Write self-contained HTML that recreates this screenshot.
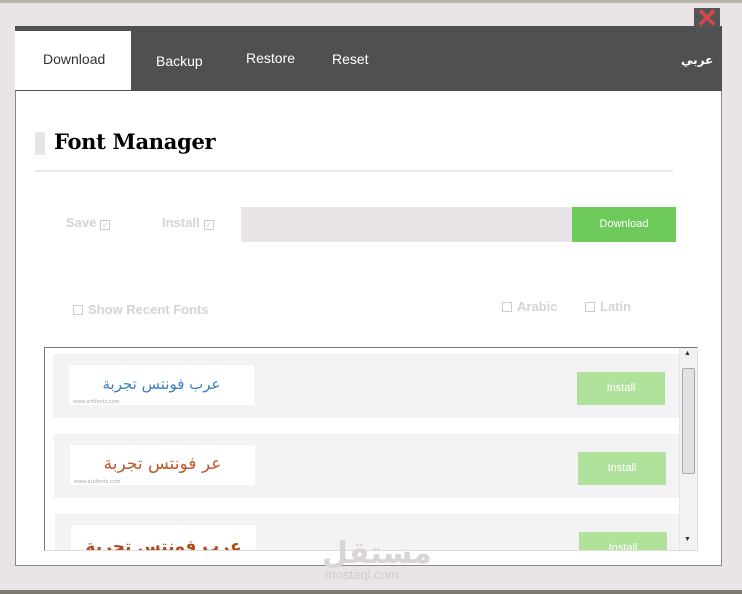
<!DOCTYPE html>
<html><head><meta charset="utf-8"><style>
*{margin:0;padding:0;box-sizing:border-box}
body{width:742px;height:594px;background:#e9e4e8;position:relative;overflow:hidden;font-family:"Liberation Sans",sans-serif}
.a{position:absolute}
.tab{position:absolute;top:51px;color:#fff;font-size:14px}
.row{position:absolute;background:#f4f2f5;width:626px;height:64px}
.img{position:absolute;left:16px;top:11px;width:185px;height:40px;background:#fff;font-family:"DejaVu Sans","Noto Sans CJK SC",sans-serif;font-size:15px;text-align:center;line-height:38px;direction:rtl}
.img small{position:absolute;left:4px;bottom:0;font-size:5px;color:#aaa;line-height:6px;direction:ltr}
.btn{position:absolute;left:524px;top:18px;width:88px;height:33px;background:#b0e29b;color:#fff;font-size:11px;text-align:center;line-height:33px}
.cb{display:inline-block;width:10px;height:10px;border:1px solid #ccc;vertical-align:-1px;margin-left:4px;font-size:9px;line-height:8px;text-align:center;font-weight:normal}
.lbl{position:absolute;color:#d6d2d6;font-size:13px;font-weight:bold}
</style></head><body>
<div class="a" style="left:0;top:0;width:742px;height:3px;background:#b9b3a8"></div>
<div class="a" style="left:0;top:590px;width:742px;height:4px;background:#7d7a72"></div>
<div class="a" style="left:15px;top:26px;width:707px;height:66px;background:#505050"></div>
<div class="a" style="left:15px;top:31px;width:116px;height:59px;background:#fff"></div>
<div class="tab" style="left:43px;color:#333">Download</div>
<div class="tab" style="left:156px;top:53px">Backup</div>
<div class="tab" style="left:246px;top:50px">Restore</div>
<div class="tab" style="left:332px;top:51px">Reset</div>
<div class="tab" style="left:681px;top:53px;font-weight:bold;font-size:12px;font-family:'DejaVu Sans',sans-serif">عربي</div>
<div class="a" style="left:694px;top:8px;width:26px;height:20px;background:#555;color:#d8484a;font-size:26px;line-height:20px;text-align:center;font-weight:bold">✕</div>
<div class="a" style="left:15px;top:91px;width:707px;height:475px;background:#fff;border:1px solid #888;border-top:none"></div>
<div class="a" style="left:35px;top:132px;width:10px;height:23px;background:#e9e4e8"></div>
<div class="a" style="left:54px;top:129px;font-family:'DejaVu Serif','Liberation Serif',serif;font-weight:bold;font-size:21px;letter-spacing:-0.3px;color:#000">Font Manager</div>
<div class="a" style="left:35px;top:170px;width:638px;height:2px;background:#ece8ec"></div>
<div class="lbl" style="left:66px;top:215px">Save<span class="cb">✓</span></div>
<div class="lbl" style="left:162px;top:215px">Install<span class="cb">✓</span></div>
<div class="a" style="left:241px;top:207px;width:333px;height:35px;background:#e9e4e8"></div>
<div class="a" style="left:572px;top:207px;width:104px;height:35px;background:#6ecb5b;color:#fff;font-size:11px;text-align:center;line-height:35px">Download</div>
<div class="lbl" style="left:73px;top:302px"><span class="cb" style="margin:0 5px 0 0"></span>Show Recent Fonts</div>
<div class="lbl" style="left:502px;top:299px"><span class="cb" style="margin:0 5px 0 0"></span>Arabic</div>
<div class="lbl" style="left:585px;top:299px"><span class="cb" style="margin:0 5px 0 0"></span>Latin</div>
<div class="a" style="left:44px;top:347px;width:654px;height:204px;border:1px solid #777;border-right-color:#ddd;border-bottom-color:#ddd;overflow:hidden;background:#fff">
 <div class="row" style="left:8px;top:6px"><div class="img" style="color:#3a7fc0">عرب فونتس تجربة<small>www.arbfonts.com</small></div><div class="btn">Install</div></div>
 <div class="row" style="left:9px;top:86px"><div class="img" style="color:#c0582e;font-size:17px">عر فونتس تجربة<small>www.arbfonts.com</small></div><div class="btn">Install</div></div>
 <div class="row" style="left:10px;top:166px"><div class="img" style="color:#b04a20;font-weight:bold;font-size:17px;line-height:44px">عرب فونتس تجربة الخط</div><div class="btn">Install</div></div>
 <div class="a" style="left:634px;top:0;width:18px;height:204px;background:#f2f2f2;border-left:1px solid #e6e6e6"></div>
 <div class="a" style="left:637px;top:20px;width:13px;height:106px;background:#e2e2e2;border:1px solid #aaa;border-radius:2px"></div>
 <div class="a" style="left:639px;top:2px;font-size:7px;color:#333">▲</div>
 <div class="a" style="left:639px;top:188px;font-size:7px;color:#333">▼</div>
</div>
<div class="a" style="left:322px;top:536px;color:#d8d4d8;font-size:30px;font-weight:bold;font-family:'DejaVu Sans',sans-serif">مستقل</div>
<div class="a" style="left:325px;top:567px;color:#cfcbcf;font-size:13px">mostaql.com</div>
</body></html>
